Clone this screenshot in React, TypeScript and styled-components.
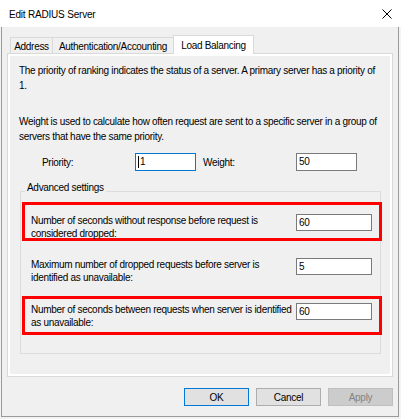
import React from "react";
import styled, { createGlobalStyle } from "styled-components";

const GlobalStyle = createGlobalStyle`
  html, body { margin: 0; padding: 0; background: #f3f3f3; }
  body {
    font-family: "Liberation Sans", Arial, sans-serif;
    font-size: 10px;
    letter-spacing: -0.3px;
    color: #000;
  }
  * { box-sizing: border-box; }
`;

const Dialog = styled.div`
  width: 401px;
  height: 419px;
  display: flex;
  flex-direction: column;
`;

const TitleBar = styled.div`
  height: 27px;
  flex: none;
  background: #fff;
  display: flex;
  align-items: center;
  justify-content: space-between;
  padding: 0 9px 0 9px;
`;

const Title = styled.span`
  padding-top: 2px;
  letter-spacing: -0.2px;
`;

const CloseIcon = styled.svg`
  width: 10px;
  height: 10px;
  display: block;
`;

const Body = styled.div`
  height: 390px;
  flex: none;
  margin: 0 2px 0 1px;
  background: #f0f0f0;
  border: 1px solid #9a9a9a;
  border-top: none;
  padding: 8px 5px 0 5px;
  display: flex;
  flex-direction: column;
`;

const TabStrip = styled.div`
  height: 18px;
  flex: none;
  display: flex;
  align-items: flex-start;
  padding-left: 3px;
  position: relative;
  z-index: 1;
`;

const Tab = styled.div<{ $active?: boolean; $w: number }>`
  width: ${(p) => p.$w}px;
  height: ${(p) => (p.$active ? 19 : 16)}px;
  margin-top: ${(p) => (p.$active ? 0 : 2)}px;
  margin-left: -1px;
  &:first-child { margin-left: 0; }
  border: 1px solid #d9d9d9;
  border-bottom: none;
  background: ${(p) => (p.$active ? "#ffffff" : "#f0f0f0")};
  text-align: center;
  line-height: ${(p) => (p.$active ? 18 : 15)}px;
  padding-top: 1px;
  white-space: nowrap;
`;

const Panel = styled.div`
  height: 324px;
  flex: none;
  border: 1px solid #d9d9d9;
  padding: 2px;
  background: #fff;
`;

const PanelInner = styled.div`
  height: 100%;
  background: #f0f0f0;
  padding-top: 7px;
  display: flex;
  flex-direction: column;
`;

const Paragraph = styled.p`
  margin: 0;
  padding-left: 9px;
  line-height: 15px;
  white-space: nowrap;
  & + & { margin-top: 21px; }
`;

const FieldRow = styled.div`
  display: flex;
  align-items: center;
  height: 18px;
  margin-top: 9px;
  padding-left: 32px;
`;

const FieldLabel = styled.span<{ $w: number; $ml?: number }>`
  width: ${(p) => p.$w}px;
  margin-left: ${(p) => p.$ml ?? 0}px;
  flex: none;
`;

const TextBox = styled.div<{ $w: number; $h: number; $focused?: boolean }>`
  width: ${(p) => p.$w}px;
  height: ${(p) => p.$h}px;
  flex: none;
  border: 1px solid ${(p) => (p.$focused ? "#0078d7" : "#7a7a7a")};
  background: #fff;
  padding-left: 2px;
  display: flex;
  align-items: center;
  line-height: 12px;
`;

const Caret = styled.span`
  display: inline-block;
  width: 1px;
  height: 12px;
  background: #000;
  margin-right: 1px;
`;

const GroupBox = styled.fieldset`
  margin: 10px 9px 0 10px;
  padding: 0 0 18px 0;
  border: 1px solid #dcdcdc;
  min-width: 0;
`;

const GroupLegend = styled.legend`
  margin-left: 4px;
  padding: 0 2px 8px 2px;
  line-height: 13px;
`;

const RowList = styled.div`
  display: flex;
  flex-direction: column;
  gap: 8px;
  margin: 0 -2px 0 1px;
`;

const SettingRow = styled.div<{ $highlight?: boolean; $pt: number }>`
  height: 39px;
  border: 3px solid ${(p) => (p.$highlight ? "#ff0000" : "transparent")};
  padding: ${(p) => p.$pt}px 0 0 6px;
  display: flex;
  align-items: flex-start;
`;

const SettingLabel = styled.div`
  width: 265px;
  flex: none;
  line-height: 13px;
  white-space: nowrap;
`;

const ButtonBar = styled.div`
  display: flex;
  justify-content: flex-end;
  gap: 7px;
  margin-top: 11px;
`;

const Button = styled.div<{ $kind?: "default" | "normal" | "disabled" }>`
  width: 65px;
  height: 18px;
  border: 1px solid
    ${(p) =>
      p.$kind === "default" ? "#0078d7" : p.$kind === "disabled" ? "#bfbfbf" : "#adadad"};
  background: ${(p) => (p.$kind === "disabled" ? "#cccccc" : "#e1e1e1")};
  color: ${(p) => (p.$kind === "disabled" ? "#838383" : "#000")};
  display: flex;
  align-items: center;
  justify-content: center;
  padding-top: 1px;
`;

export default function App() {
  return (
    <>
      <GlobalStyle />
      <Dialog>
        <TitleBar>
          <Title>Edit RADIUS Server</Title>
          <CloseIcon viewBox="0 0 10 10">
            <path d="M0.5 0.5L9.5 9.5M9.5 0.5L0.5 9.5" stroke="#000" strokeWidth="1" fill="none" />
          </CloseIcon>
        </TitleBar>
        <Body>
          <TabStrip>
            <Tab $w={43}>Address</Tab>
            <Tab $w={122}>Authentication/Accounting</Tab>
            <Tab $w={81} $active>
              Load Balancing
            </Tab>
          </TabStrip>
          <Panel>
            <PanelInner>
              <Paragraph>
                The priority of ranking indicates the status of a server. A primary server has a priority of
                <br />
                1.
              </Paragraph>
              <Paragraph>
                Weight is used to calculate how often request are sent to a specific server in a group of
                <br />
                servers that have the same priority.
              </Paragraph>
              <FieldRow>
                <FieldLabel $w={93}>Priority:</FieldLabel>
                <TextBox $w={61} $h={18} $focused>
                  <Caret />1
                </TextBox>
                <FieldLabel $w={93} $ml={7}>
                  Weight:
                </FieldLabel>
                <TextBox $w={61} $h={18}>
                  50
                </TextBox>
              </FieldRow>
              <GroupBox>
                <GroupLegend>Advanced settings</GroupLegend>
                <RowList>
                  <SettingRow $highlight $pt={9}>
                    <SettingLabel>
                      Number of seconds without response before request is
                      <br />
                      considered dropped:
                    </SettingLabel>
                    <TextBox $w={76} $h={17}>60</TextBox>
                  </SettingRow>
                  <SettingRow $pt={6}>
                    <SettingLabel>
                      Maximum number of dropped requests before server is
                      <br />
                      identified as unavailable:
                    </SettingLabel>
                    <TextBox $w={76} $h={17}>5</TextBox>
                  </SettingRow>
                  <SettingRow $highlight $pt={4}>
                    <SettingLabel>
                      Number of seconds between requests when server is identified
                      <br />
                      as unavailable:
                    </SettingLabel>
                    <TextBox $w={76} $h={17}>60</TextBox>
                  </SettingRow>
                </RowList>
              </GroupBox>
            </PanelInner>
          </Panel>
          <ButtonBar>
            <Button $kind="default">OK</Button>
            <Button>Cancel</Button>
            <Button $kind="disabled">Apply</Button>
          </ButtonBar>
        </Body>
      </Dialog>
    </>
  );
}
